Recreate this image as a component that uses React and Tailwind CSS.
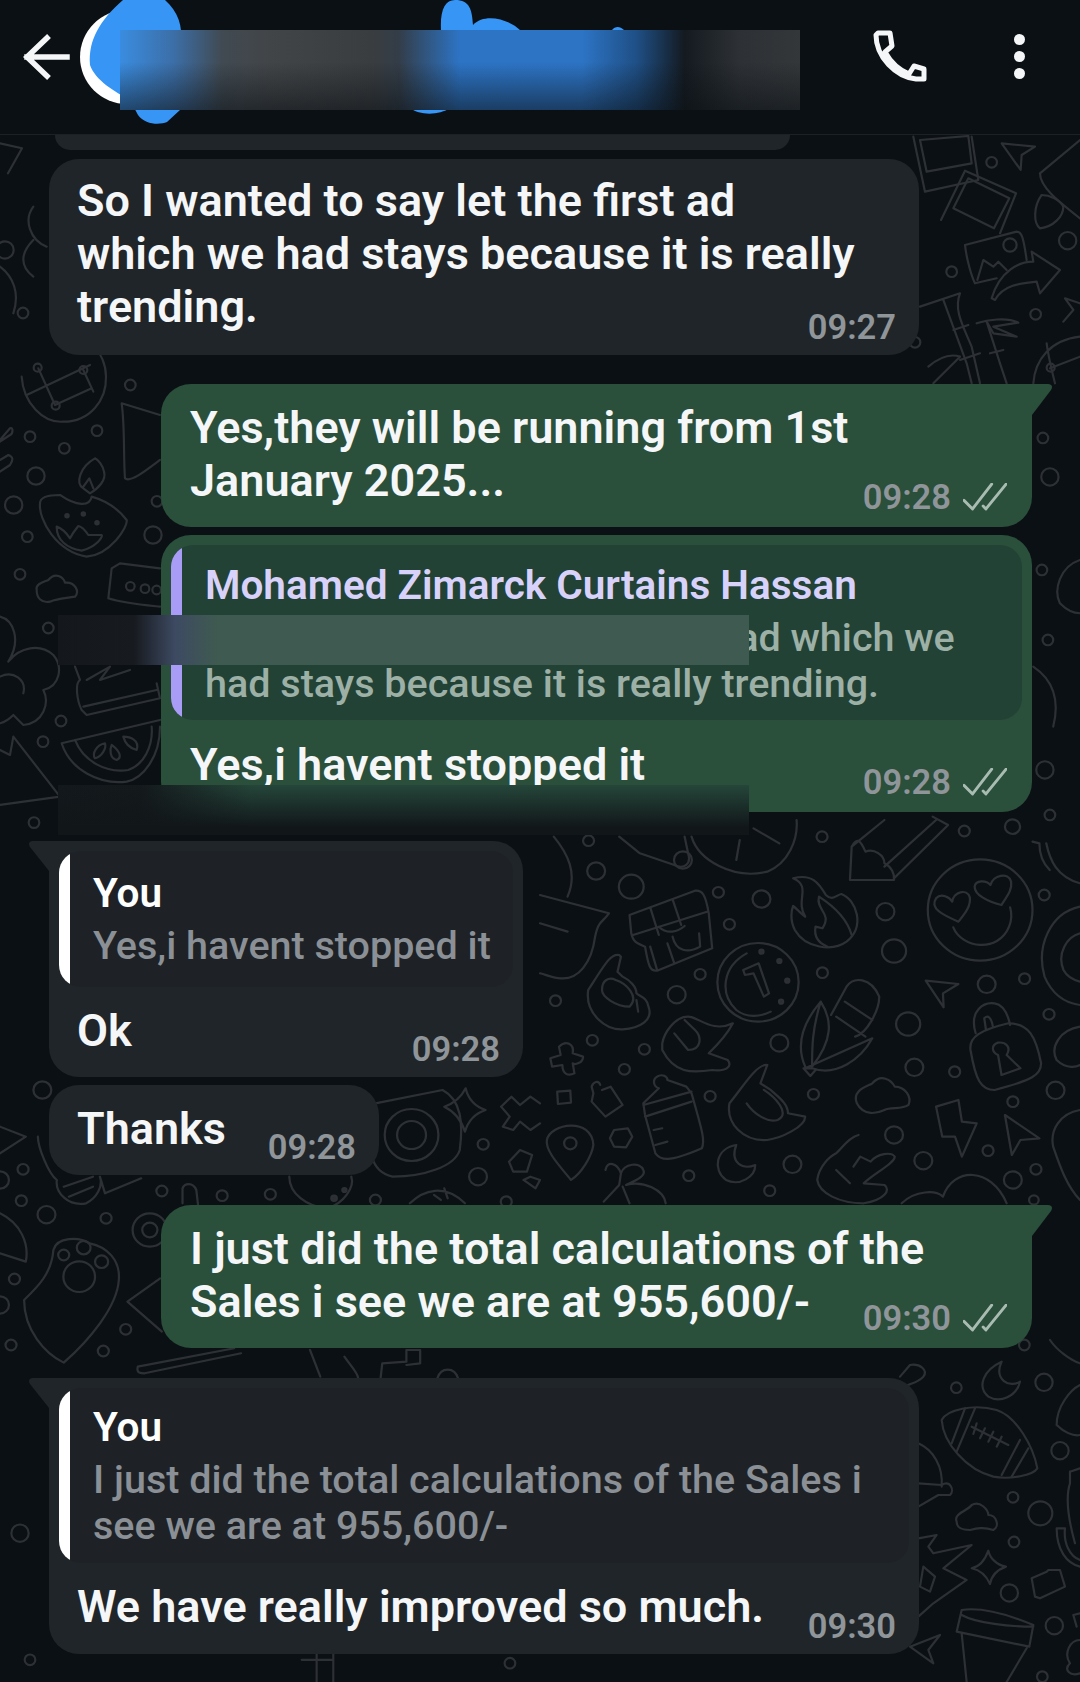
import React from 'react';

const dot = (x, y, r) => <circle key={`${x}-${y}`} cx={x} cy={y} r={r} />;

function Region({ x, y, sx = 0.3333, sy = 0.3333, circles = [], paths = [], dots = [] }) {
  return (
    <g transform={`translate(${x} ${y}) scale(${sx} ${sy})`}>
      {circles.map(([cx, cy, r]) => dot(cx, cy, r))}
      {paths.map((d, i) => <path key={i} d={d} />)}
      {dots.map(([cx, cy, r]) => <circle key={`f${cx}-${cy}`} cx={cx} cy={cy} r={r} fill="#2b2f34" />)}
    </g>
  );
}

// wallpaper doodles, traced region by region
function Doodles() {
  return (
    <svg className="absolute inset-0 w-full h-full" viewBox="0 0 1080 1547" fill="none" stroke="#2d3136" strokeWidth="6.5" strokeLinejoin="round" strokeLinecap="round">
      <g transform="translate(0 -135)">
        {/* edges of the page, in page px x3 */}
        <Region
          x={0} y={0}
          circles={[[69,939,16],[15,750,26],[3129,1314,16],[3150,1431,26],[3126,1710,16],[3144,1920,16],[3135,2310,26],[3150,2445,16],[90,4980,16],[60,4600,26],[1530,4990,16]]}
          paths={[
            'M0 430L66 445L24 520',
            'M100 620C70 660 90 720 140 740M100 720C60 760 60 800 100 830',
            'M0 800C40 830 60 880 40 940',
            'M3240 1680C3180 1700 3160 1770 3180 1810C3200 1830 3220 1840 3240 1840',
            'M3100 2000C3160 2040 3180 2100 3160 2180',
            'M905 4950L1000 4950L1000 5046M905 4980L1000 4980M950 4950L950 5046',
          ]}
        />
        <Region
          x={0} y={360}
          circles={[[391,75,16],[90,230,16],[193,265,16],[291,212,16],[108,348,26],[41,435,26],[82,530,16],[471,424,16],[459,525,26],[60,643,16],[145,804,16],[183,1083,16],[129,1145,16],[102,1388,16],[113,23,12],[250,30,12],[167,137,12],[391,679,13],[435,686,13],[470,690,13]]}
          dots={[[201,467,5],[250,462,5],[291,488,5]]}
          paths={[
            'M65 50C70 130 130 190 190 185C270 185 320 120 318 50C318 10 300 -20 290 -30',
            'M80 105L270 15M115 25L165 135M250 30L280 95M165 135L275 85',
            'M120 430C115 480 170 575 260 590C330 585 385 500 380 480C350 440 310 420 275 410C270 440 230 440 180 405C140 405 120 415 120 430Z',
            'M170 500C170 540 200 565 245 572C290 560 310 530 305 525L265 525C255 510 245 500 235 498C225 510 215 525 210 535C200 520 185 505 170 500Z',
            'M285 295C240 320 225 370 250 385L270 400C295 385 320 360 312 335C308 315 295 300 285 295ZM250 380L268 355L280 385',
            'M365 130L480 165M365 130C375 200 370 290 375 355C390 370 440 330 480 300',
            'M0 240L30 205C40 200 40 220 30 225L0 245M0 335L30 315C40 300 40 290 25 285L0 300',
            'M110 690C105 670 135 665 145 660C165 635 190 650 195 668C225 665 240 695 225 710C200 715 175 715 150 725C125 730 110 715 110 690Z',
            'M325 715L335 625L360 610L480 625M325 715C370 730 430 735 480 740',
            'M0 770C40 780 65 840 25 905C60 860 120 850 160 885C190 920 180 980 130 990C150 1030 130 1090 70 1095L40 1065C20 1085 0 1090 0 1090M0 950C40 930 80 960 70 1000',
            'M225 920L240 960C225 970 230 1020 245 1050L260 1065L480 1015L470 970M250 1040L470 990M260 960L330 920L300 960L390 930',
            'M185 1150L480 1080M185 1150C210 1230 300 1275 380 1265C430 1255 480 1190 480 1100M225 1140C250 1205 320 1240 385 1230C430 1215 460 1160 455 1100',
            'M315 1150C290 1155 275 1180 285 1195C305 1190 320 1165 315 1150ZM335 1155C355 1170 370 1190 350 1200C330 1195 328 1170 335 1155ZM370 1130C390 1130 420 1140 410 1170C390 1165 375 1150 370 1130Z',
            'M40 1130L180 1310L0 1335M0 1170L30 1185L40 1130',
          ]}
        />
        <Region
          x={900} y={130}
          circles={[[275,97,16],[155,425,16],[407,553,16],[503,332,26],[45,637,16],[330,345,20],[452,713,12]]}
          paths={[
            'M40 20L75 185L235 150L215 20M60 30L80 125L215 100L205 18L60 30',
            'M123 270L195 122L348 190L300 310M160 235L205 145L328 205L282 295Z',
            'M305 40L405 50L365 75L362 120Z',
            'M195 345L350 305C365 305 370 320 380 390M195 345C200 390 215 440 225 460L290 445M232 450L250 390L280 410L295 395L320 420',
            'M275 505C300 420 360 395 400 395L395 365L480 420L420 490L410 455C360 460 310 465 285 510Z',
            'M60 530L180 490C160 540 190 590 215 650L240 760M130 510L200 700L215 760M160 600L205 585M85 710C120 680 150 670 180 680L100 760M180 690L240 670',
            'M230 580C260 570 320 560 355 578L280 590L350 620L280 610L260 575L300 700L320 760M270 670L310 660',
            'M400 760C405 690 450 630 540 620M440 640C445 680 460 740 465 760M450 715L540 680',
            'M425 195C400 230 400 280 420 295C460 290 490 260 490 230C480 210 450 195 425 195Z',
            'M420 130L540 30M420 130C420 170 470 210 540 265',
            'M490 575L520 540L495 505L540 520',
          ]}
        />
        <Region
          x={540} y={820} sx={0.3444}
          circles={[[141,62,16],[163,153,26],[265,200,36],[518,217,16],[643,237,26],[550,313,16],[819,50,16],[1003,275,26],[1028,393,35],[1232,33,16],[1372,20,22],[1464,225,16],[820,458,16],[465,463,16],[397,524,26],[45,542,16],[1297,493,26],[1407,476,16],[1478,583,16],[1069,612,35],[695,669,26],[303,688,16],[152,661,16],[245,748,16],[1087,742,26],[1204,755,16],[1497,811,26],[794,823,16],[494,829,16],[1373,845,16],[1028,945,26],[1301,992,16],[1113,1022,26],[733,1033,26],[1440,1048,16],[432,1067,16],[1373,1080,26],[667,1112,16],[1434,1140,14],[1278,270,152],[633,487,118],[88,970,18],[415,120,26]]}
          dots={[[643,395,6],[695,423,6],[718,482,6],[700,545,6]]}
          paths={[
            'M1200 322C1225 385 1330 400 1362 320C1370 300 1370 280 1365 262',
            'M1215 305C1170 285 1130 265 1150 235C1165 218 1190 232 1197 245C1200 215 1240 205 1248 232C1252 260 1230 285 1215 305Z',
            'M1340 255C1300 245 1262 225 1262 200C1265 180 1295 180 1308 195C1315 165 1360 155 1368 185C1372 215 1350 235 1340 255Z',
            'M770 290C740 240 790 200 735 175C790 160 810 190 830 225C850 245 860 225 875 222C920 240 945 320 890 365C850 395 770 385 740 330C725 300 730 270 735 258C745 265 760 285 770 290Z',
            'M810 230C800 270 850 280 820 325L800 320C795 350 810 370 835 380M810 230C840 250 890 290 905 345',
            'M900 180L905 80L1000 0M905 80C920 50 930 60 945 95C970 85 1000 105 1000 130C1020 140 1030 160 1028 180L900 180ZM1028 175L1185 15L1140 -10M1000 140L1150 0',
            'M260 285L450 212C470 210 480 220 490 280L500 385L340 452C320 455 315 440 305 380C280 370 270 365 265 340ZM320 262L345 345M385 238L410 315M270 345L485 275M345 320C370 345 400 335 420 318M385 350C395 395 430 400 465 380L462 340M320 380L340 450M370 370L390 430',
            'M600 400C530 440 520 520 570 570C600 595 640 590 670 575M590 450L635 430L665 520L650 530L620 460L595 465Z',
            'M815 545C770 600 740 670 770 740M815 545C850 600 850 660 790 740C790 680 790 630 815 545M845 585L890 500C910 470 960 470 985 530C985 570 950 640 915 650M860 590L945 650M885 545L965 600M770 745L965 655C930 720 860 770 790 745L765 745L785 768L800 750',
            'M1250 690C1245 650 1280 630 1360 610C1420 610 1440 650 1455 730C1455 765 1430 780 1320 810C1280 810 1265 780 1250 690Z',
            'M1265 640C1245 570 1290 545 1320 550C1350 555 1360 590 1365 615M1295 630L1290 595C1300 585 1310 590 1315 620M1340 765L1395 745L1355 705C1370 680 1350 665 1330 668C1310 675 1310 695 1330 705Z',
            'M230 405C205 400 190 430 140 510C130 580 190 630 240 628C290 625 330 600 315 560C310 530 290 530 280 520C280 500 260 480 240 470L225 455L235 410ZM180 510C180 480 200 470 220 480C250 490 290 530 260 560C220 560 180 530 180 510ZM280 540L285 575',
            'M355 670C360 640 390 590 430 590C460 590 500 640 560 610C540 650 510 680 490 700L545 720C560 740 540 755 500 750C440 760 390 760 355 690ZM390 640L430 690C470 690 470 650 450 630L420 600',
            'M660 735C630 730 590 800 550 850C540 910 590 965 660 960C700 955 770 920 770 890L720 880C720 850 690 830 670 810L640 790ZM600 850C620 880 660 910 690 900C730 880 680 830 650 810',
            'M860 1000C840 1010 810 1040 805 1080C810 1120 870 1150 940 1150C1000 1140 1020 1110 1000 1095L940 1090C970 1060 1030 1030 1030 1010C1020 995 980 1000 960 1025L930 1010L910 1040M925 945C900 950 880 980 860 1000M860 1050L900 1090',
            'M340 770C325 780 330 800 345 805L300 850L305 885L335 1000C350 1020 370 1030 470 985C480 960 470 930 440 820L425 800L370 780C370 770 355 760 340 770ZM300 855L440 815M305 890L440 845M330 930L355 925M335 975L370 965',
            'M920 850C905 810 950 800 965 790C990 760 1020 780 1030 800C1060 800 1080 830 1070 855C1050 870 1020 860 1000 870C980 880 940 890 920 850Z',
            'M1150 860L1215 840L1225 905L1268 910L1225 1010L1205 950L1168 950Z',
            'M1350 885L1450 955L1395 960L1370 1005ZM1120 482L1215 492L1170 520L1172 562Z',
            'M90 1080C50 1030 15 990 20 960C30 910 150 890 155 975C150 1010 120 1060 90 1080Z',
            'M215 930L255 925L268 950L250 982L215 980L203 955Z',
            'M570 975C510 985 500 1050 540 1080C580 1100 625 1070 625 1035C590 1050 550 1030 570 975Z',
            'M50 815L88 812L90 848L52 852Z',
            'M175 795C170 780 155 785 150 800L155 820L150 845L190 890L240 855L205 800L180 810',
            'M30 715L60 705L55 680C75 660 100 670 95 700L125 710C125 730 100 735 95 730L100 760C80 770 65 760 65 735L35 740Z',
            'M0 225L200 280C180 310 170 300 160 350C150 430 110 480 60 475C40 475 20 465 0 460M0 310L80 335M80 230C110 160 80 100 40 50M230 50L290 100L390 135C420 150 440 130 430 100L420 50M570 120L580 60M695 70L620 25M440 50C460 120 560 180 660 155C720 130 750 60 745 0',
            'M1470 70C1480 120 1500 170 1568 190M1430 65L1450 70C1450 100 1460 130 1480 150M1568 260C1480 280 1440 380 1465 470C1490 530 1530 550 1568 555M1568 340C1530 350 1500 400 1520 450C1530 470 1550 480 1568 485',
            'M1568 620C1510 630 1480 680 1500 720C1530 750 1560 740 1568 735M1568 870C1510 880 1480 930 1490 980C1510 1040 1530 1100 1568 1140',
            'M190 1050C195 1020 225 1030 235 1060C245 1030 290 1025 300 1050C310 1070 270 1085 250 1095C300 1080 360 1110 365 1150M235 1060L230 1095L185 1145M240 1100L260 1150',
            'M1050 1150C1090 1110 1150 1110 1170 1130C1200 1040 1310 1040 1355 1150',
          ]}
        />
        <Region
          x={0} y={1080} sx={0.3444}
          circles={[[123,30,26],[67,268,16],[62,362,16],[135,404,26],[308,415,16],[42,597,16],[365,748,16],[32,795,16],[300,813,16],[470,333,16],[645,347,16],[785,343,16],[1090,360,16],[1403,193,16],[1388,290,26],[1470,365,16],[185,525,16],[243,503,20],[295,545,19],[230,590,46],[1195,165,78],[1195,165,42],[435,450,50],[435,450,22],[0,300,26],[0,675,26]]}
          dots={[[970,355,8],[1000,330,6]]}
          paths={[
            'M70 660C110 620 150 580 155 510C165 470 230 470 260 490C310 500 350 540 345 600C340 680 260 780 185 848C130 820 70 750 70 660Z',
            'M1090 70L1285 30C1340 60 1345 130 1335 210C1320 260 1230 290 1140 290C1100 280 1085 250 1080 230',
            'M1290 80C1320 70 1340 50 1352 25C1360 60 1380 80 1410 90C1380 100 1360 120 1350 155C1340 120 1320 95 1290 80Z',
            'M1455 80L1485 50L1510 75L1540 50L1568 70M1455 80L1480 110L1460 140L1490 150L1510 125L1540 150L1568 130',
            'M1478 245L1510 210L1545 225L1530 275L1490 275ZM1520 300L1540 290L1568 300L1555 325Z',
            'M1190 370C1230 330 1290 310 1350 370M1260 345L1280 360M1290 325L1300 355',
            'M400 860L680 805M400 860C395 880 410 880 420 880L700 820',
            'M370 665L465 595M370 665L470 755',
            'M0 400C60 430 85 490 75 545L0 520',
            'M530 370L530 325C535 310 560 305 570 330L575 375',
            'M1105 895L1110 850L1180 845L1180 810L1220 810L1220 850L1180 855M900 810L930 890M1000 830C1020 860 1040 880 1040 895M1270 895C1280 860 1320 860 1330 895',
            'M0 140L75 170L0 220M110 170C110 200 140 280 165 300C160 340 200 380 250 370C280 355 300 320 290 290L305 340L410 295',
            'M185 320L270 290M200 350L270 320',
            'M840 290C840 340 890 380 950 385C1000 370 1030 320 1020 290',
          ]}
        />
        <Region
          x={900} y={1340}
          circles={[[169,143,16],[432,127,26],[480,332,26],[339,472,16],[421,520,36],[342,606,16],[328,759,26],[463,857,26],[427,1010,16],[373,15,16]]}
          paths={[
            'M305 65C250 90 230 140 265 170C300 190 350 170 360 125C330 145 280 120 305 65Z',
            'M125 240C140 210 220 190 290 210C350 230 400 320 412 385C400 405 330 420 280 410C200 390 130 310 125 240Z',
            'M195 205L155 310M225 205L170 335M360 300L305 405M385 325L335 410',
            'M215 260L325 315M230 250L220 282M255 265L240 295M280 275L265 305M305 290L290 320',
            'M170 545C160 520 200 515 215 495C240 480 265 510 265 525C290 525 300 560 280 570C250 560 230 565 210 570C185 570 170 565 170 545Z',
            'M215 685C240 680 255 660 265 632C270 655 290 675 318 680C290 690 275 705 270 732C260 710 240 690 215 685Z',
            'M185 810C250 800 340 830 400 855L388 920L170 875ZM185 825C230 850 330 860 400 860M185 880L200 1026M380 925L320 1026',
            'M395 715L440 695L445 690L480 690L495 740L420 775L405 770Z',
            'M55 310C100 330 130 380 125 440M55 430L125 435C150 420 165 450 150 465L115 465L55 500',
            'M55 595L110 585L85 620L100 640L215 615L130 685L200 720L100 790L55 830M70 680L105 710L90 755L60 740Z',
            'M30 920L120 885L85 930L100 970Z',
            'M510 395L540 385M510 395L510 430C500 460 500 520 525 610M470 565L495 565C490 610 510 650 540 660M470 565C470 630 500 670 540 680',
            'M470 255C470 200 510 150 540 135M470 255C490 275 520 290 540 285',
            'M0 110L30 75C60 70 85 90 70 110C50 130 30 130 15 140',
            'M450 0C470 30 510 60 540 70',
            'M540 820L520 825L530 860M540 900C510 900 490 940 510 970C490 990 510 1010 540 1000',
          ]}
        />
      </g>
    </svg>
  );
}

function Ticks() {
  return (
    <svg className="w-[44px] h-[28px] ml-[12px]" viewBox="0 0 46 29" fill="none" stroke="#a9bcb1" strokeWidth="3" strokeLinecap="round" strokeLinejoin="round">
      <path d="M1 18L10 27L30 1M21 24L24 27L45 1" />
    </svg>
  );
}

function Time({ value, read }) {
  return (
    <div className={`absolute flex items-center text-[34.5px] leading-[36px] font-semibold text-[#8f9599] ${read ? 'right-[25px] bottom-[12px]' : 'right-[23px] bottom-[10px]'}`}>
      <span>{value}</span>
      {read && <Ticks />}
    </div>
  );
}

function OutTail() {
  return (
    <svg className="absolute left-full top-0 w-[22px] h-[32px]" viewBox="0 0 22 32">
      <path d="M-1 0L16 0C20 0 21 3 19 6L0 31L-1 32Z" fill="#2a4f3b" />
    </svg>
  );
}

function InTail() {
  return (
    <svg className="absolute right-full top-0 w-[22px] h-[30px]" viewBox="0 0 22 30">
      <path d="M23 0L6 0C2 0 1 3 3 6L22 30L23 30Z" fill="#202529" />
    </svg>
  );
}

function Quote({ name, text, mine, className, bodyClass }) {
  return (
    <div className={`flex rounded-[22px] overflow-hidden ${mine ? 'bg-[#224236]' : 'bg-[#1e2226]'} ${className}`}>
      <div className={`w-[11px] shrink-0 ${mine ? 'bg-[#a99cf6]' : 'bg-white'}`} />
      <div className={`pl-[23px] ${bodyClass}`}>
        <div className={`text-[40.5px] leading-[59px] font-semibold ${mine ? 'text-[#d8d2fa]' : 'text-white'}`}>{name}</div>
        <div className={`text-[39.5px] leading-[46px] font-medium whitespace-nowrap ${mine ? 'text-[#9db0a6]' : 'text-[#8a9095]'}`}>{text}</div>
      </div>
    </div>
  );
}

export default function App() {
  return (
    <div className="w-[1080px] h-[1682px] bg-[#0b1014] overflow-hidden text-[#f4f6f7] font-['Roboto',sans-serif] flex flex-col">
      <header className="relative h-[135px] shrink-0 bg-[#0b1014] border-b border-[#1c2125] flex items-center pl-[22px] pr-[55px] pb-[21px]">
        <svg className="w-[50px] h-[46px]" viewBox="0 0 50 46" fill="none" stroke="#f5f6f7" strokeWidth="5.5" strokeLinecap="square">
          <path d="M5 23H45M25 4L5 23L25 42" />
        </svg>
        <div className="w-[94px] h-[94px] rounded-full bg-white ml-[8px]" />
        <svg className="absolute left-0 top-0 w-[1080px] h-[135px]" viewBox="0 0 1080 135" fill="#3795f6">
          <path d="M123 0L165 0C178 12 183 25 181 45L180 110L167 122C160 125 145 125 138 115L130 100C115 92 95 80 90 65C88 40 100 20 123 0Z" />
          <path d="M441 30C440 10 445 0 455 0C470 0 472 10 473 25C485 12 510 20 520 30ZM410 108L450 108C440 115 420 116 410 108ZM612 30C615 26 620 26 624 30Z" />
        </svg>
        <div className="absolute left-[120px] top-[30px] w-[680px] h-[80px] bg-[linear-gradient(to_bottom,rgba(11,16,20,0)_40%,rgba(11,16,20,0.55)_100%),linear-gradient(to_right,#3a8ce0_0%,#3c6ea6_8%,#414a52_15%,#424548_22%,#3a3d40_37%,#333d48_41%,#2d74c5_50%,#2d74c5_68%,#1f4f85_76%,#141a20_83%,#2d3135_91%,#33373a_100%)]" />
        <svg className="ml-auto w-[60px] h-[60px]" viewBox="870 28 60 60" fill="none" stroke="#f5f6f7" strokeWidth="5" strokeLinejoin="round">
          <path d="M877 34L889 34L891 47L884 53C889 62 898 71 908 75L913 67L923 70L923 80L915 80C895 78 875 58 875 36Z" />
        </svg>
        <div className="ml-[83px] flex flex-col gap-[6px]">
          <span className="w-[11px] h-[11px] rounded-full bg-[#f5f6f7]" />
          <span className="w-[11px] h-[11px] rounded-full bg-[#f5f6f7]" />
          <span className="w-[11px] h-[11px] rounded-full bg-[#f5f6f7]" />
        </div>
      </header>

      <main className="relative flex-1 overflow-hidden">
        <Doodles />

        <div className="relative flex flex-col items-start pl-[49px]">
          <div className="ml-[6px] w-[735px] h-[15px] rounded-b-[28px] bg-[#202529]" />

          <div className="relative mt-[9px] w-[870px] h-[196px] rounded-[30px] bg-[#202529] pl-[28px] pt-[15px] text-[45px] leading-[53px] font-semibold">
            So I wanted to say let the first ad<br />
            which we had stays because it is really<br />
            trending.
            <Time value="09:27" />
          </div>

          <div className="relative mt-[29px] ml-[112px] w-[871px] h-[143px] rounded-[30px] rounded-tr-none bg-[#2a4f3b] pl-[29px] pt-[17px] text-[45px] leading-[53px] font-semibold">
            <OutTail />
            Yes,they will be running from 1st<br />
            January 2025...
            <Time value="09:28" read />
          </div>

          <div className="relative mt-[8px] ml-[112px] w-[871px] h-[277px] rounded-[30px] bg-[#2a4f3b] pt-[10px] px-[10px]">
            <Quote mine className="h-[175px]" bodyClass="pt-[11px]" name="Mohamed Zimarck Curtains Hassan" text={<>So I wanted to say let the first ad which we<br />had stays because it is really trending.</>} />
            <div className="pl-[19px] pt-[18px] text-[45px] leading-[53px] font-semibold">Yes,i havent stopped it</div>
            <Time value="09:28" read />
          </div>

          <div className="relative mt-[29px] w-[474px] h-[236px] rounded-[30px] rounded-tl-none bg-[#202529] pt-[10px] px-[10px]">
            <InTail />
            <Quote className="h-[136px]" bodyClass="pt-[13px]" name="You" text="Yes,i havent stopped it" />
            <div className="pl-[18px] pt-[17px] text-[45px] leading-[53px] font-semibold">Ok</div>
            <Time value="09:28" />
          </div>

          <div className="relative mt-[8px] w-[330px] h-[90px] rounded-[30px] bg-[#202529] pl-[28px] pt-[17px] text-[45px] leading-[53px] font-semibold">
            Thanks
            <Time value="09:28" />
          </div>

          <div className="relative mt-[30px] ml-[112px] w-[871px] h-[143px] rounded-[30px] rounded-tr-none bg-[#2a4f3b] pl-[29px] pt-[17px] text-[45px] leading-[53px] font-semibold">
            <OutTail />
            I just did the total calculations of the<br />
            Sales i see we are at 955,600/-
            <Time value="09:30" read />
          </div>

          <div className="relative mt-[30px] w-[870px] h-[276px] rounded-[30px] rounded-tl-none bg-[#202529] pt-[10px] px-[10px]">
            <InTail />
            <Quote className="h-[175px]" bodyClass="pt-[10px]" name="You" text={<>I just did the total calculations of the Sales i<br />see we are at 955,600/-</>} />
            <div className="pl-[18px] pt-[17px] text-[45px] leading-[53px] font-semibold">We have really improved so much.</div>
            <Time value="09:30" />
          </div>
        </div>

        {/* redaction smears laid over the chat */}
        <div className="absolute left-[58px] top-[480px] w-[691px] h-[50px] bg-[linear-gradient(to_right,#14181c_0%,#171a1f_11%,#3d4a62_17%,#3f5a50_23%,#3f5a50_100%)]" />
        <div className="absolute left-[58px] top-[650px] w-[691px] h-[50px] bg-[linear-gradient(to_bottom,rgba(17,22,25,0)_0%,#111619_85%),linear-gradient(to_right,#13181c_0%,#14191c_12%,#25463a_28%,#25463a_100%)]" />
      </main>
    </div>
  );
}
